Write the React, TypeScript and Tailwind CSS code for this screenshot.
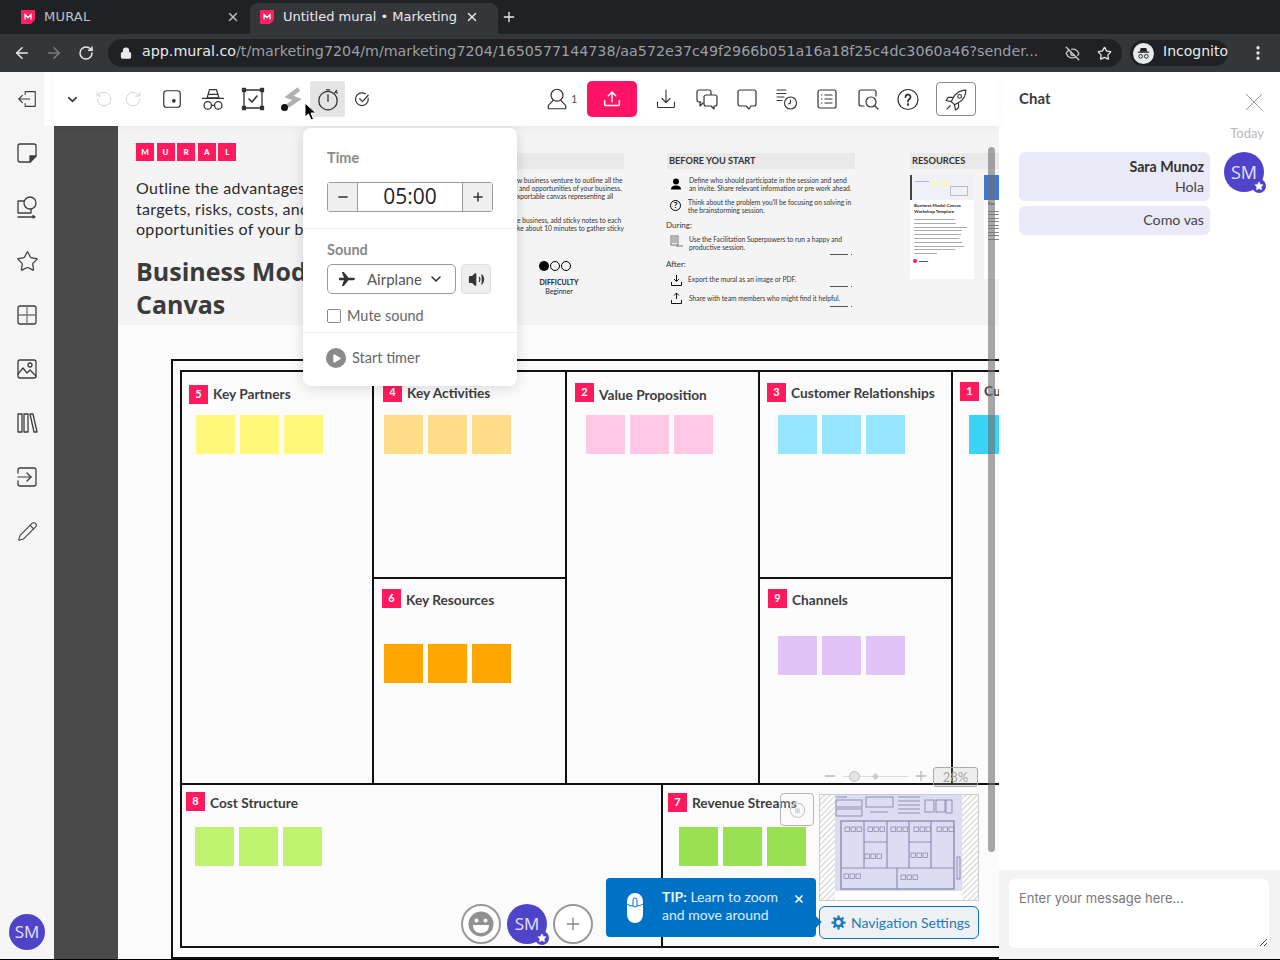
import type { ReactNode } from "react";
import { ChevronDown, Plus, Minus, X, Star, Pencil, ArrowLeft, ArrowRight, RotateCw, RotateCcw, Lock, EyeOff, EllipsisVertical, Volume2, Play } from "lucide-react";

const PROXIMA = "font-['Lato',sans-serif]";

function Ico({ size = 24, w = 1.5, children, className = "" }: { size?: number; w?: number; children: ReactNode; className?: string }) {
    return (
        <svg width={size} height={size} viewBox="0 0 24 24" fill="none" stroke="currentColor" strokeWidth={w} strokeLinecap="round" strokeLinejoin="round" className={className}>
            {children}
        </svg>
    );
}

function Favicon() {
    return (
        <svg width="14" height="14" viewBox="0 0 14 14" className="shrink-0">
            <path d="M1 0h12a1 1 0 011 1v9l-4 4H1a1 1 0 01-1-1V1a1 1 0 011-1z" fill="#ff1f62" />
            <path d="M4 9.500V4.500l3 3 3-3v5" stroke="#fff" strokeWidth="1.300" fill="none" />
        </svg>
    );
}

function Tab({ title, active }: { title: string; active?: boolean }) {
    return (
        <div className={active
            ? "flex items-center h-[31px] w-[248px] pl-[10px] pr-[19px] pb-[4px] rounded-t-lg bg-[#35363a] text-[#e8eaed]"
            : "flex items-center h-[31px] w-[242px] pl-[13px] pr-[10px] pb-[4px] text-[#bdc1c6]"}>
            <Favicon />
            <span className={active ? "ml-[9px] flex-1 text-[13px] whitespace-nowrap" : "ml-[9px] flex-1 text-[13px] tracking-[0.2px]"}>{title}</span>
            <X size={14} strokeWidth={2.400} />
        </div>
    );
}

function BrowserChrome() {
    return (
        <div className="font-['DejaVu_Sans',sans-serif]">
            <div className="h-[34px] bg-[#202124] flex items-end pl-[8px]">
                <Tab title="MURAL" />
                <Tab title="Untitled mural • Marketing" active />
                <Plus size={16} strokeWidth={2} className="text-[#e8eaed] ml-[3px] mb-[9px]" />
            </div>
            <div className="h-[38px] bg-[#35363a] flex items-center pl-[13px]">
                <ArrowLeft size={18} strokeWidth={2} className="text-[#e8eaed]" />
                <ArrowRight size={18} strokeWidth={2} className="text-[#7c7f84] ml-[14px]" />
                <RotateCw size={16} strokeWidth={2.200} className="text-[#e8eaed] ml-[15px]" />
                <div className="ml-[14px] w-[1014px] h-[28px] rounded-full bg-[#202124] flex items-center pl-[12px] pr-[10px]">
                    <Lock size={12} strokeWidth={2.500} fill="#e8eaed" className="text-[#e8eaed]" />
                    <div className="ml-[10px] pb-[2px] text-[14.280px] whitespace-nowrap text-[#9aa0a6] flex-1">
                        <span className="text-[#e8eaed]">app.mural.co</span>/t/marketing7204/m/marketing7204/1650577144738/aa572e37c49f2966b051a16a18f25c4dc3060a46?sender...
                    </div>
                    <EyeOff size={15} strokeWidth={2.200} className="text-[#c4c7cb]" />
                    <Star size={15} strokeWidth={2} className="text-[#e8eaed] ml-[17px]" />
                </div>
                <div className="ml-[8px] w-[98px] h-[26px] rounded-full bg-[#202124] flex items-center pl-[3px]">
                    <div className="w-[21px] h-[21px] rounded-full bg-[#e8eaed] flex items-center justify-center">
                        <svg width="15" height="15" viewBox="0 0 16 16" fill="#202124"><path d="M5 2h6l1 4H4z" /><rect x="2" y="6" width="12" height="1.200" /><circle cx="5" cy="11" r="2" fill="none" stroke="#202124" /><circle cx="11" cy="11" r="2" fill="none" stroke="#202124" /></svg>
                    </div>
                    <span className="ml-[9px] pb-[3px] text-[14px] text-[#e8eaed]">Incognito</span>
                </div>
                <EllipsisVertical size={18} strokeWidth={2.400} className="text-[#e8eaed] ml-[21px]" />
            </div>
        </div>
    );
}

const SIDE_ICONS: ReactNode[] = [
    <Ico key="s" w={1.300}><path d="M5 3h14a2 2 0 012 2v10l-6 6H5a2 2 0 01-2-2V5a2 2 0 012-2z" /><path d="M21 15l-6 6v-6z" fill="currentColor" /></Ico>,
    <Ico key="sh" w={1.300}><rect x="3" y="6" width="13" height="12" /><circle cx="15" cy="8" r="6" fill="#f5f5f5" /><path d="M3 22h17M18 20.500l2 1.500-2 1" /></Ico>,
    <Star key="st" size={23} strokeWidth={1.300} />,
    <Ico key="g" w={1.300}><rect x="3" y="3" width="18" height="18" rx="2" /><path d="M12 3v18M3 12h18" stroke="#777" /></Ico>,
    <Ico key="i" w={1.300}><rect x="3" y="3" width="18" height="18" rx="2" /><circle cx="15" cy="8" r="2" /><path d="M3 17l5-6 4 5 3-3 6 6" /></Ico>,
    <Ico key="l" w={1.300}><rect x="3" y="3" width="4" height="18" /><rect x="9" y="3" width="4" height="18" /><path d="M15 3h3l4 18h-3z" /></Ico>,
    <Ico key="e" w={1.300}><path d="M3 8V5a2 2 0 012-2h14a2 2 0 012 2v14a2 2 0 01-2 2H5a2 2 0 01-2-2v-3" /><path d="M3 12h13" stroke="#777" /><path d="M12 8l4 4-4 4" /></Ico>,
    <Pencil key="p" size={21} strokeWidth={1.200} />,
];

function SmAvatar({ className, star }: { className: string; star?: boolean }) {
    return (
        <div className={`relative rounded-full bg-[#4f44c9] text-[#e4e2fa] flex items-center justify-center font-['Open_Sans',sans-serif] ${className}`}>
            SM
            {star && (
                <span className="absolute right-[-2px] bottom-[-1px] w-[14px] h-[14px] rounded-full bg-[#4f44c9] flex items-center justify-center">
                    <Star size={10} fill="#fff" strokeWidth={1} className="text-white" />
                </span>
            )}
        </div>
    );
}

function Sidebar() {
    return (
        <div className="w-[54px] shrink-0 bg-[#f5f5f5] flex flex-col items-center text-[#3d3d3d]">
            <div className="h-[54px] w-full flex items-center justify-center bg-[linear-gradient(to_right,#f5f5f5_44px,#ffffff_44px)]">
                <Ico size={22} w={1.200}><path d="M10 7V4h11v16H10v-3" /><path d="M15 12H3M7 8l-4 4 4 4" /></Ico>
            </div>
            {SIDE_ICONS.map((icon, i) => (
                <div key={i} className="h-[54px] w-full flex items-center justify-center">{icon}</div>
            ))}
            <SmAvatar className="w-[36px] h-[36px] text-[17px] mt-auto mb-[9px]" />
        </div>
    );
}

function ToolIcon({ className, children }: { className: string; children: ReactNode }) {
    return <div className={`flex items-center justify-center shrink-0 ${className}`}>{children}</div>;
}

function Toolbar() {
    return (
        <div className="h-[54px] shrink-0 bg-white shadow-[0_3px_6px_rgba(0,0,0,0.04)] flex items-center pl-[11px] text-[#333] relative z-10">
            <ChevronDown size={15} strokeWidth={2.400} />
            <RotateCcw size={18} strokeWidth={1.200} className="text-[#cfcfcf] ml-[15px]" />
            <RotateCw size={18} strokeWidth={1.200} className="text-[#cfcfcf] ml-[11px]" />
            <ToolIcon className="w-[22px] ml-[19px]">
                <Ico size={24} w={1.300}><rect x="3" y="3" width="18" height="18" rx="3" /><circle cx="14" cy="14" r="1.400" fill="currentColor" /></Ico>
            </ToolIcon>
            <ToolIcon className="w-[28px] ml-[16px]">
                <Ico size={28} w={1.100}><path d="M9 4h6l2 7H7z" /><path d="M3 11.500h18M8 8h8" /><circle cx="7.500" cy="17.500" r="3.200" /><circle cx="16.500" cy="17.500" r="3.200" /><path d="M10.700 17.500h2.600" /></Ico>
            </ToolIcon>
            <ToolIcon className="w-[24px] ml-[14px]">
                <Ico size={24} w={1.300}><rect x="3" y="3" width="18" height="18" /><path d="M8 12l3 3 5-6" strokeWidth="1.600" /><rect x="1.500" y="1.500" width="3" height="3" fill="currentColor" /><rect x="19.500" y="1.500" width="3" height="3" fill="currentColor" /><rect x="1.500" y="19.500" width="3" height="3" fill="currentColor" /><rect x="19.500" y="19.500" width="3" height="3" fill="currentColor" /></Ico>
            </ToolIcon>
            <ToolIcon className="w-[24px] ml-[14px]">
                <svg width="24" height="26" viewBox="0 0 24 26">
                    <path d="M20 3L10 10.500l8 3L8.500 20" fill="none" stroke="#b0b0b0" strokeWidth="4.500" strokeLinejoin="miter" />
                    <circle cx="5.500" cy="21.500" r="3.500" fill="#111" />
                </svg>
            </ToolIcon>
            <ToolIcon className="w-[35px] h-[36px] bg-[#e4e4e4] rounded-[2px] ml-[7px]">
                <Ico size={26} w={1.200}><circle cx="12" cy="13.500" r="8.500" /><path d="M12 8v6M10.500 3.500h3" /><path d="M19 5l1.500 1.500M18 6.500L20 4" strokeWidth="1.100" /></Ico>
            </ToolIcon>
            <ToolIcon className="w-[18px] ml-[8px]">
                <Ico size={17} w={1.700}><path d="M20 10a9 9 0 11-4-6" /><path d="M8 11l4 4 8-9" /></Ico>
            </ToolIcon>
            <ToolIcon className="w-[28px] ml-[172px]">
                <Ico size={26} w={1.100}><circle cx="12" cy="8.500" r="5.500" /><path d="M8.500 13c-1 2-3 3-4.500 5v3h16v-3c-1.500-2-3.500-3-4.500-5" /></Ico>
            </ToolIcon>
            <span className="text-[11px] text-[#555] w-[9px]">1</span>
            <div className="w-[50px] h-[36px] bg-[#ff1465] rounded-[5px] flex items-center justify-center text-white ml-[7px]">
                <Ico size={22} w={1.600}><path d="M12 15V5M8 8.500l4-4 4 4M4 14v4a1 1 0 001 1h14a1 1 0 001-1v-4" /></Ico>
            </div>
            <ToolIcon className="w-[24px] ml-[17px]">
                <Ico size={24} w={1.100}><path d="M12 3v12M8 11.500l4 4 4-4M3.500 15v4.500a1 1 0 001 1h15a1 1 0 001-1V15" /></Ico>
            </ToolIcon>
            <ToolIcon className="w-[24px] ml-[17px]">
                <Ico size={24} w={1.200}><path d="M6 15H4a2 2 0 01-2-2V5a2 2 0 012-2h10a2 2 0 012 2v3" /><path d="M5 15v4l3-3" /><path d="M11 8h9a2 2 0 012 2v7a2 2 0 01-2 2h-1v3l-3-3h-5a2 2 0 01-2-2v-7a2 2 0 012-2z" fill="#fff" /></Ico>
            </ToolIcon>
            <ToolIcon className="w-[24px] ml-[16px]">
                <Ico size={24} w={1.200}><path d="M5 3h14a2 2 0 012 2v12a2 2 0 01-2 2h-3l-2 3-3-3H5a2 2 0 01-2-2V5a2 2 0 012-2z" /></Ico>
            </ToolIcon>
            <ToolIcon className="w-[24px] ml-[16px]">
                <Ico size={24} w={1.100}><path d="M2 3h9M2 6.500h9M2 10h7M2 13.500h5" /><circle cx="15.500" cy="16" r="6" /><path d="M15.500 13v3l-2 1" /></Ico>
            </ToolIcon>
            <ToolIcon className="w-[24px] ml-[16px]">
                <Ico size={24} w={1.200}><rect x="3" y="3" width="18" height="18" rx="2" /><path d="M10 8h7M10 12h7M10 16h7M6.500 8h.5M6.500 12h.5M6.500 16h.5" /></Ico>
            </ToolIcon>
            <ToolIcon className="w-[24px] ml-[17px]">
                <Ico size={24} w={1.200}><path d="M20 9V5a2 2 0 00-2-2H5a2 2 0 00-2 2v12a2 2 0 002 2h3" /><circle cx="15" cy="15" r="5" /><path d="M19 19l3 3" /></Ico>
            </ToolIcon>
            <ToolIcon className="w-[24px] ml-[16px]">
                <Ico size={25} w={1.200}><circle cx="12" cy="12" r="10" /><path d="M9.500 9.500a2.500 2.500 0 114 2c-1 .7-1.500 1.200-1.500 2.500" strokeWidth="1.800" /><circle cx="12" cy="17" r=".6" fill="currentColor" /></Ico>
            </ToolIcon>
            <div className="w-[40px] h-[34px] border border-[#888] rounded-[4px] flex items-center justify-center ml-[16px]">
                <Ico size={25} w={1.100}><path d="M21 3c-5 0-9 2-12 7l-2 4 3 3 4-2c5-3 7-7 7-12z" /><circle cx="15" cy="9" r="1.800" /><path d="M8 10H4l-2 3 5 1M14 16v4l-3 2-1-5M6 18l-3 3" /></Ico>
            </div>
        </div>
    );
}

function Sticky({ color }: { color: string }) {
    return <div className={`w-[39px] h-[39px] ${color}`} />;
}

type Cell = { n: number; label: string; head: string; drop: string; row: string; color: string };

const CELLS: Cell[] = [
    { n: 5, label: "Key Partners", head: "left-[71px] top-[258px]", drop: "", row: "left-[78px] top-[289px]", color: "bg-[#fff87a]" },
    { n: 4, label: "Key Activities", head: "left-[265px] top-[256px]", drop: "translate-y-[1px]", row: "left-[266px] top-[289px]", color: "bg-[#ffdd88]" },
    { n: 2, label: "Value Proposition", head: "left-[457px] top-[256px]", drop: "translate-y-[3px]", row: "left-[468px] top-[289px]", color: "bg-[#ffc8e6]" },
    { n: 3, label: "Customer Relationships", head: "left-[649px] top-[256px]", drop: "translate-y-[1px]", row: "left-[660px] top-[289px]", color: "bg-[#96e6ff]" },
    { n: 1, label: "Customer Segments", head: "left-[842px] top-[255px]", drop: "", row: "left-[851px] top-[289px]", color: "bg-[#38d3f5]" },
    { n: 6, label: "Key Resources", head: "left-[264px] top-[462px]", drop: "translate-y-[2px]", row: "left-[266px] top-[518px]", color: "bg-[#ffa500]" },
    { n: 9, label: "Channels", head: "left-[650px] top-[462px]", drop: "translate-y-[2px]", row: "left-[660px] top-[510px]", color: "bg-[#e2c3f8]" },
    { n: 8, label: "Cost Structure", head: "left-[68px] top-[665px]", drop: "translate-y-[2px]", row: "left-[77px] top-[701px]", color: "bg-[#bff26e]" },
    { n: 7, label: "Revenue Streams", head: "left-[550px] top-[666px]", drop: "translate-y-[1px]", row: "left-[561px] top-[701px]", color: "bg-[#99e052]" },
];

function Board() {
    return (
        <>
            <div className="absolute left-[53px] top-[233px] w-[900px] h-[600px] border-2 border-[#111]" />
            <div className="absolute left-[62px] top-[244px] w-[880px] h-[578px] border-2 border-[#111]">
                <div className="absolute left-[190px] top-0 w-[2px] h-[412px] bg-[#111]" />
                <div className="absolute left-[383px] top-0 w-[2px] h-[412px] bg-[#111]" />
                <div className="absolute left-[576px] top-0 w-[2px] h-[412px] bg-[#111]" />
                <div className="absolute left-[769px] top-0 w-[2px] h-[412px] bg-[#111]" />
                <div className="absolute left-[190px] top-[205px] w-[194px] h-[2px] bg-[#111]" />
                <div className="absolute left-[576px] top-[205px] w-[194px] h-[2px] bg-[#111]" />
                <div className="absolute left-0 top-[411px] w-full h-[2px] bg-[#111]" />
                <div className="absolute left-[479px] top-[412px] w-[2px] h-[164px] bg-[#111]" />
            </div>
            {CELLS.map((c) => (
                <div key={c.n}>
                    <div className={`absolute flex items-center gap-[5px] whitespace-nowrap ${c.head}`}>
                        <span className="w-[19px] h-[19px] bg-[#ff1a5e] text-white text-[11px] font-bold flex items-center justify-center">{c.n}</span>
                        <span className={`text-[13.700px] font-bold text-[#3c3d40] ${c.drop}`}>{c.label}</span>
                    </div>
                    <div className={`absolute flex gap-[5px] ${c.row}`}>
                        <Sticky color={c.color} />
                        <Sticky color={c.color} />
                        <Sticky color={c.color} />
                    </div>
                </div>
            ))}
        </>
    );
}

function TinyRow({ pos, children }: { pos: string; children: ReactNode }) {
    return <div className={`absolute text-[6.700px] leading-[8px] text-[#333] whitespace-nowrap ${pos}`}>{children}</div>;
}

function TinyRule({ pos }: { pos: string }) {
    return (
        <div className={`absolute flex items-center gap-[3px] ${pos}`}>
            <div className="w-[18px] h-px bg-[#555]" />
            <div className="w-px h-px bg-[#555]" />
        </div>
    );
}

function MuralHeader() {
    return (
        <div className="absolute left-0 top-0 w-full h-[199px] bg-[#f4f4f4]">
            <div className="absolute left-[18px] top-[17px] flex gap-[2.600px]">
                {["M", "U", "R", "A", "L"].map((l) => (
                    <span key={l} className="w-[18px] h-[18px] bg-[#ff1a5e] text-white text-[8px] font-black flex items-center justify-center">{l}</span>
                ))}
            </div>
            <div className="absolute left-[18px] top-[52px] w-[200px] text-[16px] tracking-[0.3px] leading-[20.500px] text-[#2a2a2a] whitespace-nowrap">
                <p>Outline the advantages</p>
                <p>targets, risks, costs, and</p>
                <p>opportunities of your business</p>
            </div>
            <div className="absolute left-[18px] top-[129px] text-[25px] leading-[33px] font-bold text-[#3b3b3b] whitespace-nowrap font-['Open_Sans',sans-serif]">
                <p>Business Model</p>
                <p>Canvas</p>
            </div>

            <div className="absolute left-[399px] top-[27px] w-[107px] h-[16px] bg-[#e9e9e9]" />
            <TinyRow pos="left-[399px] top-[50px]">w business venture to outline all the</TinyRow>
            <TinyRow pos="left-[401px] top-[58px]">and opportunities of your business.</TinyRow>
            <TinyRow pos="left-[399px] top-[66px]">xportable canvas representing all</TinyRow>
            <TinyRow pos="left-[399px] top-[90px]">e business, add sticky notes to each</TinyRow>
            <TinyRow pos="left-[399px] top-[98px]">ke about 10 minutes to gather sticky</TinyRow>
            <div className="absolute left-[421px] top-[135px] flex gap-px">
                <span className="w-[10px] h-[10px] rounded-full bg-black" />
                <span className="w-[10px] h-[10px] rounded-full border border-black" />
                <span className="w-[10px] h-[10px] rounded-full border border-black" />
            </div>
            <div className="absolute left-[401px] top-[152px] w-[80px] text-center text-[7px] leading-[9px] text-[#222]">
                <p className="font-bold">DIFFICULTY</p>
                <p>Beginner</p>
            </div>

            <div className="absolute left-[549px] top-[27px] w-[188px] h-[16px] bg-[#e9e9e9] text-[9.200px] font-bold text-[#333] pl-[2px] flex items-center whitespace-nowrap">BEFORE YOU START</div>
            <svg className="absolute left-[552px] top-[52px]" width="12" height="12" viewBox="0 0 12 12"><circle cx="6" cy="3.500" r="3" /><path d="M1 11.500c0-3 2-4 5-4s5 1 5 4z" /></svg>
            <TinyRow pos="left-[571px] top-[50px]">Define who should participate in the session and send</TinyRow>
            <TinyRow pos="left-[571px] top-[58px]">an invite. Share relevant information or pre work ahead.</TinyRow>
            <div className="absolute left-[552px] top-[74px] w-[11px] h-[11px] rounded-full border border-black text-[8px] leading-[9px] font-bold text-center">?</div>
            <TinyRow pos="left-[570px] top-[72px]">Think about the problem you'll be focusing on solving in</TinyRow>
            <TinyRow pos="left-[570px] top-[80px]">the brainstorming session.</TinyRow>
            <div className="absolute left-[548px] top-[94px] text-[8px] leading-[10px] text-[#333]">During:</div>
            <svg className="absolute left-[552px] top-[109px]" width="14" height="13" viewBox="0 0 14 13" fill="none" stroke="#555" strokeWidth=".8"><rect x="1" y="1" width="7" height="9" /><path d="M2 3h5M2 5h5M2 7h5M6 11h7" /></svg>
            <TinyRow pos="left-[571px] top-[109px]">Use the Facilitation Superpowers to run a happy and</TinyRow>
            <TinyRow pos="left-[571px] top-[117px]">productive session.</TinyRow>
            <TinyRule pos="left-[712px] top-[128px]" />
            <div className="absolute left-[548px] top-[133px] text-[8px] leading-[10px] text-[#333]">After:</div>
            <svg className="absolute left-[553px] top-[148px]" width="11" height="12" viewBox="0 0 11 12" fill="none" stroke="#111" strokeWidth="1"><path d="M5.500 1v6M3 5l2.500 2.500L8 5M.5 8v3.500h10V8" /></svg>
            <TinyRow pos="left-[570px] top-[149px]">Export the mural as an image or PDF.</TinyRow>
            <TinyRule pos="left-[712px] top-[160px]" />
            <svg className="absolute left-[553px] top-[166px]" width="11" height="12" viewBox="0 0 11 12" fill="none" stroke="#111" strokeWidth="1"><path d="M5.500 7V1M3 3.500L5.500 1 8 3.500M.5 8v3.500h10V8" /></svg>
            <TinyRow pos="left-[571px] top-[168px]">Share with team members who might find it helpful.</TinyRow>
            <TinyRule pos="left-[712px] top-[180px]" />

            <div className="absolute left-[792px] top-[27px] w-[90px] h-[16px] bg-[#e9e9e9] text-[9.300px] font-bold text-[#333] pl-[2px] flex items-center">RESOURCES</div>
            <div className="absolute left-[792px] top-[49px] w-[64px] h-[104px] bg-white">
                <div className="h-[25px] bg-[#f0f1f6] border-l-2 border-[#444] flex items-start gap-[3px] pl-[3px] pt-[6px]">
                    <span className="w-[14px] h-[1px] bg-[#a9b8e6]" />
                    <span className="w-[6px] h-[6px] bg-[#fbf3c4]" />
                    <span className="w-[6px] h-[6px] bg-[#fbf3c4]" />
                    <span className="w-[18px] h-[10px] border border-[#bbb] mt-[5px]" />
                </div>
                <p className="text-[4.500px] leading-[6px] font-bold text-[#222] pl-[4px] mt-[3px] whitespace-nowrap">Business Model Canvas<br />Workshop Template</p>
                <div className="flex flex-col gap-[2.800px] pl-[4px] mt-[4px]">
                    {["w-[41px]", "w-[42px]", "w-[53px]", "w-[48px]", "w-[47px]", "w-[45px]", "w-[48px]", "w-[50px]", "w-[41px]", "w-[23px]"].map((w, i) => (
                        <div key={i} className={`h-px bg-[#aaa] ${w}`} />
                    ))}
                </div>
                <div className="flex items-center gap-[2px] pl-[3px] mt-[5px]">
                    <span className="w-[4px] h-[4px] rounded-full bg-[#ff1a5e]" />
                    <span className="w-[9px] h-px bg-[#555]" />
                </div>
            </div>
            <div className="absolute left-[866px] top-[49px] w-[16px] h-[104px] bg-white">
                <div className="h-[25px] bg-[#3f78d6]" />
                <p className="text-[4.500px] font-bold text-[#222] pl-[4px] mt-[1px]">Fac</p>
                <div className="flex flex-col gap-[2.500px] pl-[4px] mt-[3px]">
                    {[0, 1, 2, 3, 4, 5, 6, 7, 8].map((i) => <div key={i} className="h-px bg-[#888] w-full" />)}
                </div>
            </div>
        </div>
    );
}

function TimerPopover() {
    return (
        <div className={`absolute left-[185px] top-[2px] w-[214px] h-[258px] bg-white rounded-[8px] shadow-[0_2px_14px_rgba(0,0,0,0.14)] flex flex-col z-20 ${PROXIMA}`}>
            <div className="h-[101px] px-[24px] pt-[21px] border-b border-[#ececec]">
                <p className="text-[14.500px] leading-[18px] font-bold text-[#8a8a8a]">Time</p>
                <div className="mt-[15px] w-[166px] h-[30px] border border-[#9a9a9a] rounded-[3px] flex text-[#333]">
                    <div className="w-[30px] bg-[#efefef] border-r border-[#9a9a9a] flex items-center justify-center"><Minus size={14} strokeWidth={2.600} /></div>
                    <div className="flex-1 text-[21px] text-center leading-[27px] text-[#222] font-['Open_Sans',sans-serif]">05:00</div>
                    <div className="w-[30px] bg-[#efefef] border-l border-[#9a9a9a] flex items-center justify-center"><Plus size={14} strokeWidth={2.600} /></div>
                </div>
            </div>
            <div className="h-[104px] px-[24px] pt-[12px] border-b border-[#ececec]">
                <p className="text-[14.500px] leading-[18px] font-bold text-[#8a8a8a]">Sound</p>
                <div className="mt-[5px] flex gap-[5px]">
                    <div className="w-[129px] h-[30px] border border-[#9a9a9a] rounded-[5px] flex items-center pl-[11px] text-[#555]">
                        <svg width="16" height="16" viewBox="0 0 16 16" fill="#333"><path d="M0 6.800h5L2.800 1h2l4.700 5.800H14c1.200 0 2 .6 2 1.200s-.8 1.200-2 1.200H9.500L4.800 15h-2L5 9.200H0L0 6.800z" /></svg>
                        <span className="ml-[12px] text-[15px]">Airplane</span>
                        <ChevronDown size={16} strokeWidth={2.400} className="ml-[6px] text-[#333]" />
                    </div>
                    <div className="w-[30px] h-[30px] bg-[#eeeeee] border border-[#e0e0e0] rounded-[4px] flex items-center justify-center">
                        <Volume2 size={17} fill="#333" strokeWidth={1.600} className="text-[#333]" />
                    </div>
                </div>
                <div className="mt-[14px] flex items-center">
                    <span className="w-[14px] h-[14px] bg-white border border-[#8a8a8a] rounded-[2px]" />
                    <span className="ml-[6px] text-[14.500px] leading-[16px] text-[#666]">Mute sound</span>
                </div>
            </div>
            <div className="flex-1 pl-[23px] pt-[15px] flex items-start">
                <div className="w-[20px] h-[20px] rounded-full bg-[#8a8a8a] flex items-center justify-center">
                    <Play size={11} fill="#fff" strokeWidth={0} className="ml-[1px]" />
                </div>
                <span className="ml-[6px] text-[14.500px] leading-[20px] text-[#666]">Start timer</span>
            </div>
        </div>
    );
}

function MiniBlock({ x, y }: { x: number; y: number }) {
    return (
        <g stroke="#8d8db5" strokeWidth=".8" fill="none">
            <rect x={x} y={y} width="4.500" height="4.500" />
            <rect x={x + 6} y={y} width="4.500" height="4.500" />
            <rect x={x + 12} y={y} width="4.500" height="4.500" />
        </g>
    );
}

function Minimap() {
    return (
        <svg className="absolute left-[701px] top-[668px]" width="160" height="107" viewBox="0 0 160 107">
            <defs>
                <pattern id="hatch" width="4" height="4" patternUnits="userSpaceOnUse" patternTransform="rotate(45)">
                    <rect width="4" height="4" fill="#fff" />
                    <rect width="1.200" height="4" fill="#d4d4d4" />
                </pattern>
            </defs>
            <rect x=".5" y=".5" width="159" height="106" fill="url(#hatch)" stroke="#ccc" />
            <rect x="16" y="1" width="127" height="105" fill="#fff" />
            <rect x="16" y="1" width="127" height="96" fill="#dcdcf2" />
            <g stroke="#8d8db5" strokeWidth="1" fill="none">
                <rect x="17" y="6" width="26" height="7" />
                <rect x="17" y="15" width="26" height="7" />
                <rect x="47" y="3" width="27" height="10" />
                <path d="M17 3h11M51 18h18" />
                <path d="M79 3h22M79 7h22M79 11h22M79 15h22M79 19h22" />
                <rect x="106" y="6" width="9" height="12" />
                <rect x="117" y="6" width="9" height="12" />
                <rect x="127" y="6" width="6" height="13" />
                <rect x="22" y="27" width="113" height="68" strokeWidth="1.400" />
                <path d="M45 27v47M68 27v47M90 27v47M112 27v47M45 48h23M90 48h22M22 74h113M78 74v21" strokeWidth="1.200" />
                <rect x="138" y="63" width="3" height="22" />
            </g>
            <MiniBlock x={26} y={33} />
            <MiniBlock x={49} y={33} />
            <MiniBlock x={72} y={33} />
            <MiniBlock x={95} y={33} />
            <MiniBlock x={118} y={33} />
            <MiniBlock x={46} y={60} />
            <MiniBlock x={92} y={59} />
            <MiniBlock x={25} y={80} />
            <MiniBlock x={82} y={81} />
        </svg>
    );
}

function NavOverlays() {
    return (
        <>
            <div className="absolute left-[704px] top-[642px] flex items-center text-[#bbb]">
                <Minus size={16} strokeWidth={2} />
                <div className="relative ml-[5px] w-[65px] h-px bg-[#ddd]">
                    <span className="absolute left-[6px] top-[-5px] w-[11px] h-[11px] rounded-full bg-[#e4e4e4] border border-[#bbb]" />
                    <span className="absolute left-[30px] top-[-2px] w-[5px] h-[5px] rotate-45 bg-[#ccc]" />
                </div>
                <Plus size={16} strokeWidth={2} className="ml-[5px]" />
            </div>
            <div className="absolute left-[815px] top-[641px] w-[45px] h-[20px] border border-[#aaa] rounded-[3px] bg-[#bbb]/20 text-[13px] leading-[18px] text-[#a5a5a5] text-center">28%</div>
            <div className="absolute left-[662px] top-[667px] w-[34px] h-[33px] border border-[#b5b5b5] rounded-[4px] bg-white/20 flex items-center justify-center text-[#c9c9c9]">
                <Ico size={19} w={1.400}><circle cx="12" cy="13" r="9" /><path d="M10 11v5M12 11v5M14 11v5" /></Ico>
            </div>
            <Minimap />
            <div className="absolute left-[701px] top-[780px] w-[160px] h-[33px] bg-[#edf1f4] border border-[#0a72bd] rounded-[6px] flex items-center pl-[11px] text-[#2679b6]">
                <svg width="15" height="15" viewBox="0 0 16 16" fill="none" stroke="#1f78bb">
                    <circle cx="8" cy="8" r="4" strokeWidth="2.800" />
                    <path d="M8 0.500v3M8 12.500v3M0.500 8h3M12.500 8h3M2.700 2.700l2.100 2.100M11.200 11.200l2.100 2.100M2.700 13.300l2.100-2.100M11.200 4.800l2.100-2.100" strokeWidth="2.400" />
                </svg>
                <span className="ml-[5px] text-[14px] whitespace-nowrap">Navigation Settings</span>
            </div>
            <div className="absolute left-[488px] top-[752px] w-[210px] h-[59px] bg-[#0072c6] rounded-[4px] flex items-center text-white">
                <svg className="ml-[20px]" width="18" height="32" viewBox="0 0 18 32">
                    <path d="M9 1C4 1 1 5 1 10v12c0 5 3 9 8 9s8-4 8-9V10c0-5-3-9-8-9z" fill="#fff" />
                    <path d="M1 12c3 2 5 2 8 2s5 0 8-2" fill="none" stroke="#0072c6" />
                    <rect x="7" y="6" width="4" height="9" rx="2" fill="#fff" stroke="#0072c6" />
                </svg>
                <p className="ml-[18px] mb-[4px] text-[14px] leading-[18px] text-[#dceefa] w-[120px]"><b className="text-[#e8f3fb]">TIP:</b> Learn to zoom and move around</p>
                <X size={12} strokeWidth={3.400} className="ml-[11px] mb-[18px]" />
                <span className="absolute right-[-4px] top-[40px] w-[8px] h-[8px] rotate-45 bg-[#0072c6]" />
            </div>
            <div className="absolute left-[343px] top-[778px] flex gap-[6px]">
                <div className="w-[40px] h-[40px] rounded-full border-2 border-[#999] bg-white flex items-center justify-center">
                    <svg width="26" height="26" viewBox="0 0 26 26">
                        <circle cx="13" cy="13" r="12.500" fill="#919191" />
                        <circle cx="8.500" cy="9.500" r="2" fill="#fff" />
                        <circle cx="17.500" cy="9.500" r="2" fill="#fff" />
                        <path d="M5 14h16c0 5-3 8-8 8s-8-3-8-8z" fill="#fff" />
                    </svg>
                </div>
                <SmAvatar star className="w-[40px] h-[40px] text-[17px]" />
                <div className="w-[40px] h-[40px] rounded-full border-2 border-[#999] bg-white flex items-center justify-center text-[#888]">
                    <Plus size={20} strokeWidth={1.600} />
                </div>
            </div>
        </>
    );
}

function Canvas() {
    return (
        <div className="flex-1 flex min-h-0">
            <div className="w-[64px] shrink-0 bg-[#4a4a4a]" />
            <div className={`flex-1 relative overflow-hidden bg-[#fbfbfb] ${PROXIMA}`}>
                <MuralHeader />
                <Board />
                <NavOverlays />
                <div className="absolute right-[4px] top-[21px] w-[7px] h-[705px] rounded-full bg-[#6e6e6e]/60" />
                <TimerPopover />
            </div>
        </div>
    );
}

function Chat() {
    return (
        <div className={`w-[281px] shrink-0 bg-white flex flex-col ${PROXIMA}`}>
            <div className="flex-1 px-[20px] pt-[16px] pr-[16px]">
                <div className="flex items-start justify-between">
                    <span className="text-[15px] leading-[20px] font-bold text-[#3a3a3a]">Chat</span>
                    <svg width="18" height="18" viewBox="0 0 18 18" stroke="#999" strokeWidth="1" className="mt-[5px] mr-[1px]"><path d="M1 1l16 16M17 1L1 17" /></svg>
                </div>
                <p className="text-right text-[13px] leading-[16px] text-[#b9b9b9] mt-[14px]">Today</p>
                <div className="flex justify-between mt-[11px]">
                    <div className="w-[191px] flex flex-col gap-[5px] text-[14.200px] text-right text-[#444]">
                        <div className="h-[49px] bg-[#e9e9f7] rounded-[6px] pr-[6px] pt-[5px] leading-[20px]">
                            <p className="font-bold text-[#333]">Sara Munoz</p>
                            <p>Hola</p>
                        </div>
                        <div className="h-[29px] bg-[#e9e9f7] rounded-[6px] pr-[6px] leading-[28px]">Como vas</div>
                    </div>
                    <SmAvatar star className="w-[40px] h-[40px] text-[18px]" />
                </div>
            </div>
            <div className="h-[89px] bg-[#f3f3f3] pl-[10px] pr-[11px] pt-[9px]">
                <div className="relative h-[69px] bg-white rounded-[6px] pl-[10px] pt-[10px] text-[13px] leading-[18px] text-[#777] font-['Inter',sans-serif]">
                    Enter your message here...
                    <svg className="absolute right-[1px] bottom-[1px]" width="9" height="9" viewBox="0 0 9 9" stroke="#444" strokeWidth="1"><path d="M1 8l7-7M5 8l3-3" /></svg>
                </div>
            </div>
        </div>
    );
}

export default function App() {
    return (
        <div className="w-[1280px] h-[960px] bg-black overflow-hidden">
            <div className="h-[959px] flex flex-col">
                <BrowserChrome />
                <div className="flex-1 flex min-h-0">
                    <Sidebar />
                    <div className={`w-[945px] flex flex-col ${PROXIMA}`}>
                        <Toolbar />
                        <Canvas />
                    </div>
                    <Chat />
                </div>
            </div>
            <svg className="fixed left-[304px] top-[102px] z-30" width="13" height="19" viewBox="0 0 13 19">
                <path d="M1 1v14l3.500-3 2.500 6 2.500-1-2.500-6h5z" fill="#000" stroke="#fff" strokeWidth="1" />
            </svg>
        </div>
    );
}
